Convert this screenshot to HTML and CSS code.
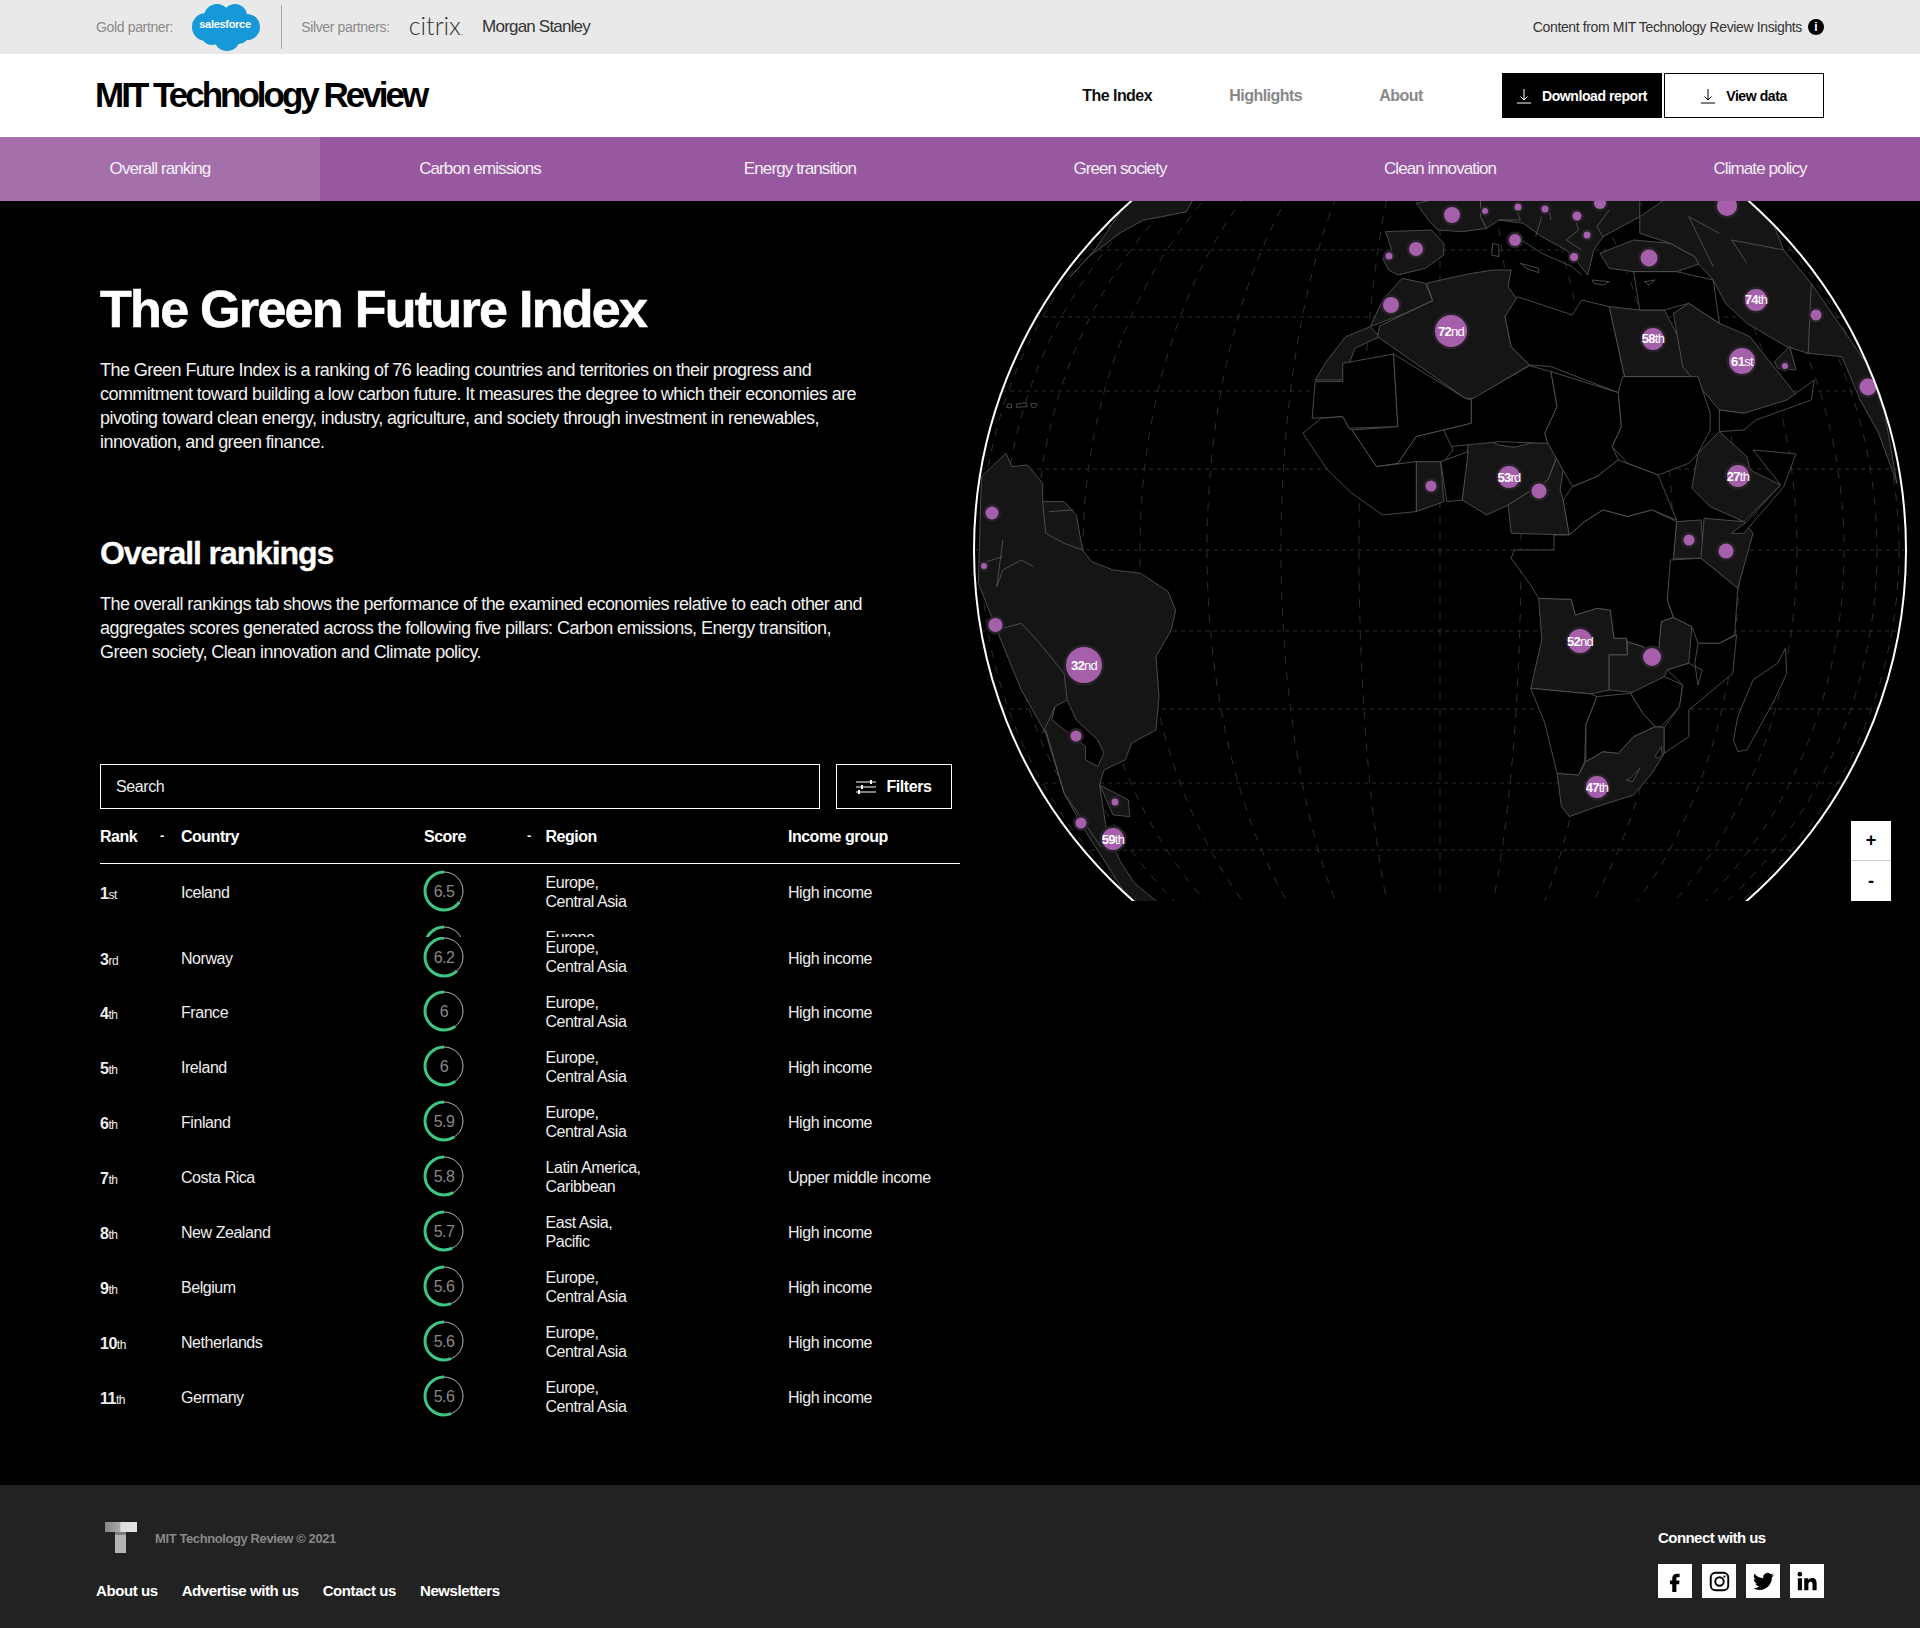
FILE: index.html
```html
<!DOCTYPE html>
<html lang="en">
<head>
<meta charset="utf-8">
<title>The Green Future Index</title>
<link rel="stylesheet" href="styles.css">
</head>
<body>

<div class="partners">
  <div class="partners-left">
    <span class="partner-label">Gold partner:</span>
    <svg class="salesforce" viewBox="0 0 70 48" width="70" height="48">
      <circle cx="16" cy="24" r="14"/><circle cx="27" cy="14" r="13"/><circle cx="45" cy="13" r="12"/><circle cx="57" cy="24" r="13"/><circle cx="37" cy="35" r="13"/><circle cx="22" cy="31" r="11"/><circle cx="49" cy="31" r="10"/>
      <text x="35" y="25" text-anchor="middle">salesforce</text>
    </svg>
    <span class="partner-rule"></span>
    <span class="partner-label">Silver partners:</span>
    <span class="citrix">citrix<small>.</small></span>
    <span class="morgan">Morgan Stanley</span>
  </div>
  <div class="partners-right">
    <span>Content from MIT Technology Review Insights</span>
    <span class="info">i</span>
  </div>
</div>

<header class="masthead">
  <div class="logo">MIT Technology Review</div>
  <nav class="mainnav">
    <a class="active">The Index</a>
    <a>Highlights</a>
    <a>About</a>
  </nav>
  <div class="actions">
    <a class="btn btn-dark"><svg viewBox="0 0 14 16" width="14" height="16"><path d="M7 1v11M3.500 8.500 7 12l3.500-3.500M0 15h14"/></svg>Download report</a>
    <a class="btn btn-light"><svg viewBox="0 0 14 16" width="14" height="16"><path d="M7 1v11M3.500 8.500 7 12l3.500-3.500M0 15h14"/></svg>View data</a>
  </div>
</header>

<div class="tabs">
  <a class="tab tab-on">Overall ranking</a>
  <a class="tab">Carbon emissions</a>
  <a class="tab">Energy transition</a>
  <a class="tab">Green society</a>
  <a class="tab">Clean innovation</a>
  <a class="tab">Climate policy</a>
</div>

<main class="main">
  <section class="left">
    <h1>The Green Future Index</h1>
    <p class="intro">The Green Future Index is a ranking of 76 leading countries and territories on their progress and<br>commitment toward building a low carbon future. It measures the degree to which their economies are<br>pivoting toward clean energy, industry, agriculture, and society through investment in renewables,<br>innovation, and green finance.</p>
    <h2>Overall rankings</h2>
    <p class="intro">The overall rankings tab shows the performance of the examined economies relative to each other and<br>aggregates scores generated across the following five pillars: Carbon emissions, Energy transition,<br>Green society, Clean innovation and Climate policy.</p>

    <div class="searchbar">
      <div class="search">Search</div>
      <button class="filters"><svg viewBox="0 0 20 16" width="20" height="16"><path d="M0 3h20M0 8h20M0 13h20"/><path class="knob" d="M15 1v4M6 6v4M3 11v4"/></svg>Filters</button>
    </div>

    <div class="table">
      <div class="row head">
        <div class="sortable">Rank<i>-</i></div><div>Country</div><div class="sortable">Score<i>-</i></div><div>Region</div><div>Income group</div>
      </div>

      <div class="row">
        <div class="rank"><b>1</b>st</div><div>Iceland</div>
        <div><div class="ring"><svg viewBox="0 0 40 40"><circle class="track" cx="20" cy="20" r="19"/><circle class="fill" cx="20" cy="20" r="19" pathLength="100" stroke-dasharray="65 100"/></svg><span>6.5</span></div></div>
        <div class="region">Europe,<br>Central Asia</div><div>High income</div>
      </div>
      <div class="row row-clipped">
        <div></div><div></div>
        <div><div class="ring"><svg viewBox="0 0 40 40"><circle class="track" cx="20" cy="20" r="19"/><circle class="fill" cx="20" cy="20" r="19" pathLength="100" stroke-dasharray="64 100"/></svg></div></div>
        <div class="region">Europe,<br>Central Asia</div><div></div>
      </div>
      <div class="row row-tucked">
        <div class="rank"><b>3</b>rd</div><div>Norway</div>
        <div><div class="ring"><svg viewBox="0 0 40 40"><circle class="track" cx="20" cy="20" r="19"/><circle class="fill" cx="20" cy="20" r="19" pathLength="100" stroke-dasharray="62 100"/></svg><span>6.2</span></div></div>
        <div class="region">Europe,<br>Central Asia</div><div>High income</div>
      </div>
      <div class="row">
        <div class="rank"><b>4</b>th</div><div>France</div>
        <div><div class="ring"><svg viewBox="0 0 40 40"><circle class="track" cx="20" cy="20" r="19"/><circle class="fill" cx="20" cy="20" r="19" pathLength="100" stroke-dasharray="60 100"/></svg><span>6</span></div></div>
        <div class="region">Europe,<br>Central Asia</div><div>High income</div>
      </div>
      <div class="row">
        <div class="rank"><b>5</b>th</div><div>Ireland</div>
        <div><div class="ring"><svg viewBox="0 0 40 40"><circle class="track" cx="20" cy="20" r="19"/><circle class="fill" cx="20" cy="20" r="19" pathLength="100" stroke-dasharray="60 100"/></svg><span>6</span></div></div>
        <div class="region">Europe,<br>Central Asia</div><div>High income</div>
      </div>
      <div class="row">
        <div class="rank"><b>6</b>th</div><div>Finland</div>
        <div><div class="ring"><svg viewBox="0 0 40 40"><circle class="track" cx="20" cy="20" r="19"/><circle class="fill" cx="20" cy="20" r="19" pathLength="100" stroke-dasharray="59 100"/></svg><span>5.9</span></div></div>
        <div class="region">Europe,<br>Central Asia</div><div>High income</div>
      </div>
      <div class="row">
        <div class="rank"><b>7</b>th</div><div>Costa Rica</div>
        <div><div class="ring"><svg viewBox="0 0 40 40"><circle class="track" cx="20" cy="20" r="19"/><circle class="fill" cx="20" cy="20" r="19" pathLength="100" stroke-dasharray="58 100"/></svg><span>5.8</span></div></div>
        <div class="region">Latin America,<br>Caribbean</div><div>Upper middle income</div>
      </div>
      <div class="row">
        <div class="rank"><b>8</b>th</div><div>New Zealand</div>
        <div><div class="ring"><svg viewBox="0 0 40 40"><circle class="track" cx="20" cy="20" r="19"/><circle class="fill" cx="20" cy="20" r="19" pathLength="100" stroke-dasharray="57 100"/></svg><span>5.7</span></div></div>
        <div class="region">East Asia,<br>Pacific</div><div>High income</div>
      </div>
      <div class="row">
        <div class="rank"><b>9</b>th</div><div>Belgium</div>
        <div><div class="ring"><svg viewBox="0 0 40 40"><circle class="track" cx="20" cy="20" r="19"/><circle class="fill" cx="20" cy="20" r="19" pathLength="100" stroke-dasharray="56 100"/></svg><span>5.6</span></div></div>
        <div class="region">Europe,<br>Central Asia</div><div>High income</div>
      </div>
      <div class="row">
        <div class="rank"><b>10</b>th</div><div>Netherlands</div>
        <div><div class="ring"><svg viewBox="0 0 40 40"><circle class="track" cx="20" cy="20" r="19"/><circle class="fill" cx="20" cy="20" r="19" pathLength="100" stroke-dasharray="56 100"/></svg><span>5.6</span></div></div>
        <div class="region">Europe,<br>Central Asia</div><div>High income</div>
      </div>
      <div class="row">
        <div class="rank"><b>11</b>th</div><div>Germany</div>
        <div><div class="ring"><svg viewBox="0 0 40 40"><circle class="track" cx="20" cy="20" r="19"/><circle class="fill" cx="20" cy="20" r="19" pathLength="100" stroke-dasharray="56 100"/></svg><span>5.6</span></div></div>
        <div class="region">Europe,<br>Central Asia</div><div>High income</div>
      </div>
    </div>
  </section>

  <section class="mapbox">
    <svg class="globe" viewBox="0 0 960 700" width="960" height="700">
      <defs><clipPath id="disc"><circle cx="480" cy="349" r="466"/></clipPath></defs>
      <g clip-path="url(#disc)">
        <!-- graticule, every 10 degrees -->
        <g class="grid">
          <ellipse cx="480" cy="349" rx="81" ry="466"/><ellipse cx="480" cy="349" rx="159" ry="466"/><ellipse cx="480" cy="349" rx="233" ry="466"/><ellipse cx="480" cy="349" rx="300" ry="466"/><ellipse cx="480" cy="349" rx="357" ry="466"/><ellipse cx="480" cy="349" rx="404" ry="466"/><ellipse cx="480" cy="349" rx="437" ry="466"/><ellipse cx="480" cy="349" rx="459" ry="466"/>
          <path d="M480-117V815"/>
          <path class="parallels" d="M14 349H946M21 268H939M42 190H918M76 116H884M123 49H837M21 430H939M42 508H918M76 582H884M123 649H837"/>
        </g>
        <!-- countries, traced in a 1568 wide space -->
        <g transform="translate(0,-1) scale(.6124 .3333)">
          <g class="land">
            <path d="M75,760 85,800 110,795 135,850 135,905 170,905 190,945 200,1050 215,1085 250,1110 295,1120 340,1175 352,1230 345,1290 320,1370 325,1490 320,1590 280,1630 270,1680 235,1710 228,1755 275,1800 277,1850 250,1845 228,1755 240,1900 262,1985 285,2050 325,2110 280,2110 200,1880 170,1780 140,1600 100,1470 60,1290 30,1150 35,830Z"/>
            <path d="M275,0 380,0 370,35 330,50 300,60 260,100 240,130 210,170 190,210 180,230 220,150Z"/>
            <path d="M695,95 770,90 790,130 790,165 760,205 715,225 700,210 690,175 705,150Z"/>
            <path d="M745,10 770,0 850,0 850,50 860,85 820,95 780,90 765,60Z"/>
            <path d="M850,0 1110,0 1110,50 1070,90 1050,110 1035,150 1025,225 1010,190 990,150 950,110 920,70 880,60 860,85 850,50Z"/>
            <path d="M1045,160 1100,120 1160,130 1200,170 1210,190 1170,215 1100,215 1060,205Z"/>
            <path d="M1150,0 1285,0 1330,80 1345,150 1390,250 1420,330 1480,490 1510,640 1530,850 1500,700 1470,600 1440,470 1385,460 1350,440 1285,370 1250,310 1230,240 1205,190 1200,170 1160,130 1110,100 1110,50Z"/>
            <path d="M722,235 760,250 772,302 720,345 670,380 690,300Z"/>
            <path d="M670,380 685,410 645,445 625,540 580,540 600,480 630,410Z"/>
            <path d="M762,250 790,238 830,222 870,210 900,210 895,260 910,300 890,350 900,440 930,495 840,595 825,595 682,410 685,378 772,302Z"/>
            <path d="M1060,320 1110,330 1150,330 1170,400 1205,530 1085,530Z"/>
            <path d="M1165,340 1190,310 1240,370 1290,410 1320,480 1370,595 1280,640 1240,630 1180,500Z"/>
            <path d="M1330,485 1355,440 1365,510 1335,505Z"/>
            <path d="M820,900 830,730 860,718 880,735 905,742 935,728 960,725 975,770 960,840 895,915 860,945Z"/>
            <path d="M975,770 985,810 980,870 985,900 995,1005 900,1000 895,915 960,840Z"/>
            <path d="M745,785 785,785 790,905 745,935Z"/>
            <path d="M1240,695 1285,770 1290,810 1340,855 1280,965 1225,920 1195,865 1205,760Z"/>
            <path d="M1170,965 1210,960 1215,1075 1165,1075Z"/>
            <path d="M1215,955 1280,965 1295,1000 1270,1165 1210,1075Z"/>
            <path d="M945,1195 998,1198 1005,1245 1040,1225 1062,1230 1068,1315 1088,1315 1090,1365 1060,1365 1060,1470 1030,1482 960,1470 932,1465 950,1320Z"/>
            <path d="M1090,1325 1115,1340 1140,1370 1145,1265 1165,1252 1195,1280 1190,1390 1155,1410 1150,1430 1115,1480 1060,1470 1060,1365 1090,1365Z"/>
            <path d="M975,1720 1010,1725 1022,1685 1050,1655 1075,1660 1100,1610 1135,1580 1150,1582 1150,1660 1130,1720 1100,1785 1040,1820 995,1850 982,1820Z"/>
          </g>
          <g class="plain">
            <path d="M1100,215 1170,215 1230,240 1240,370 1190,310 1150,330 1110,330Z"/>
            <path d="M580,545 625,545 625,490 708,462 715,680 635,685 625,650 575,655Z"/>
            <path d="M708,462 825,595 835,600 835,670 790,690 745,710 715,790 680,800 640,690 715,680Z"/>
            <path d="M835,598 930,497 965,515 975,620 955,700 960,730 880,725 800,740 790,690 835,670Z"/>
            <path d="M910,290 1000,345 1015,300 1060,320 1085,530 1075,578 965,500 930,495 900,440 890,350Z"/>
            <path d="M965,515 1075,578 1080,680 1065,740 1075,780 1040,830 1000,860 960,730 955,700 975,620Z"/>
            <path d="M1082,530 1205,530 1225,640 1225,690 1205,760 1190,790 1140,825 1090,790 1065,740 1080,680 1075,578Z"/>
            <path d="M715,790 745,710 790,690 805,750 790,785 745,785 715,800Z"/>
            <path d="M560,700 590,655 625,650 635,685 640,690 680,800 745,785 745,935 690,945 640,880 600,810Z"/>
            <path d="M785,785 830,755 820,900 795,905Z"/>
            <path d="M1295,750 1365,762 1345,860 1280,1000 1260,1000 1285,965 1340,855Z"/>
            <path d="M1240,630 1280,640 1350,600 1395,540 1390,600 1300,660 1280,690 1240,695Z"/>
            <path d="M1000,860 1040,830 1075,780 1140,825 1170,960 1130,930 1090,950 1050,930 1020,965 995,1005 985,900Z"/>
            <path d="M970,1005 995,1005 1020,965 1050,930 1090,950 1130,930 1170,965 1165,1075 1160,1120 1155,1200 1165,1252 1145,1265 1140,1370 1115,1340 1090,1325 1088,1315 1068,1315 1062,1230 1040,1225 1005,1245 998,1198 945,1195 930,1150 900,1075 905,1050 970,1050Z"/>
            <path d="M1160,1080 1210,1075 1270,1165 1265,1305 1240,1330 1205,1330 1195,1280 1165,1252 1155,1200Z"/>
            <path d="M932,1465 960,1470 1030,1482 1040,1490 1022,1575 1020,1685 1010,1725 975,1720 955,1570Z"/>
            <path d="M1040,1490 1095,1480 1115,1540 1135,1580 1100,1610 1075,1660 1050,1655 1022,1685 1022,1575Z"/>
            <path d="M1095,1480 1150,1430 1180,1455 1175,1520 1145,1580 1135,1580 1115,1540Z"/>
            <path d="M1205,1330 1240,1330 1268,1305 1262,1420 1190,1530 1190,1610 1150,1660 1150,1582 1175,1520 1180,1455 1155,1410 1190,1390 1212,1410 1205,1455 1200,1390Z"/>
            <path d="M1348,1345 1350,1420 1330,1500 1285,1650 1270,1655 1263,1620 1270,1550 1295,1440 1335,1390Z"/>
            <path d="M1095,1735 1110,1705 1098,1745 1088,1740Z"/>
            <path d="M1135,1670 1145,1640 1147,1665 1140,1675Z"/>
            <path d="M155,1520 175,1500 190,1560 225,1620 235,1660 225,1700 205,1680 205,1640 150,1560Z"/>
            <path d="M915,190 945,205 945,218 925,205Z"/>
            <path d="M870,130 880,135 880,170 868,165Z"/>
            <path d="M1032,240 1060,245 1050,255 1035,250Z"/>
            <path d="M1118,245 1135,240 1125,255Z"/>
            <path d="M78,612 84,612 84,624 76,622ZM92,612 108,608 110,620 92,622ZM116,610 126,612 122,624 116,620Z"/>
          </g>
          <g class="lines">
            <path d="M60,1290 100,1270 130,1330 170,1420 175,1500M135,1600 155,1520M140,1590 170,1780 230,1940M70,1020 60,1160 70,1110 100,1080 120,1100M135,905 140,1000 170,1030 200,1050M145,935 185,930M35,1090 70,1070"/>
            <path d="M900,100 950,160 1000,200 1015,225M950,50 940,110M1000,30 1010,90 990,120 1015,150M1060,30 1040,80 1050,110M905,10 915,60 880,60M960,10 965,60M1240,100 1190,50 1230,200M1285,190 1260,120 1345,150M1390,250 1385,460"/>
          </g>
        </g>
        <!-- rated countries -->
        <g class="pins">
          <circle cx="492" cy="14" r="8"/><circle cx="525" cy="10" r="3"/><circle cx="558" cy="6" r="3.500"/><circle cx="585" cy="8" r="3.500"/><circle cx="617" cy="15" r="4.500"/><circle cx="640" cy="2" r="6"/><circle cx="767" cy="5" r="10"/><circle cx="627" cy="34" r="3.500"/><circle cx="555" cy="39" r="6"/><circle cx="456" cy="48" r="7"/><circle cx="429" cy="55" r="3.500"/><circle cx="614" cy="56" r="4"/><circle cx="689" cy="57" r="8.500"/><circle cx="431" cy="104" r="8"/><circle cx="796" cy="99" r="11"/><circle cx="856" cy="114" r="5.500"/><circle cx="491" cy="130" r="16"/><circle cx="693" cy="138" r="11"/><circle cx="782" cy="160" r="13"/><circle cx="825" cy="165" r="3"/><circle cx="908" cy="186" r="8.500"/><circle cx="549" cy="276" r="11"/><circle cx="778" cy="275" r="11"/><circle cx="579" cy="290" r="7.500"/><circle cx="471" cy="285" r="5.500"/><circle cx="32" cy="312" r="6.500"/><circle cx="729" cy="339" r="5.500"/><circle cx="766" cy="350" r="7.500"/><circle cx="24" cy="365" r="3"/><circle cx="35.500" cy="424" r="7"/><circle cx="124" cy="464" r="18"/><circle cx="620" cy="440" r="12"/><circle cx="692" cy="456" r="9"/><circle cx="637" cy="586" r="11"/><circle cx="116" cy="535" r="5.500"/><circle cx="155" cy="601" r="3.500"/><circle cx="121" cy="622" r="5.500"/><circle cx="153" cy="638" r="11"/>
        </g>
        <g class="pin-labels">
          <text x="796" y="103">74<tspan>th</tspan></text>
          <text x="491" y="135">72<tspan>nd</tspan></text>
          <text x="693" y="142">58<tspan>th</tspan></text>
          <text x="782" y="165">61<tspan>st</tspan></text>
          <text x="549" y="281">53<tspan>rd</tspan></text>
          <text x="778" y="280">27<tspan>th</tspan></text>
          <text x="124" y="469">32<tspan>nd</tspan></text>
          <text x="620" y="445">52<tspan>nd</tspan></text>
          <text x="637" y="591">47<tspan>th</tspan></text>
          <text x="153" y="643">59<tspan>th</tspan></text>
        </g>
      </g>
      <circle class="rim" cx="480" cy="349" r="466"/>
    </svg>
    <div class="zoomctl">
      <button>+</button>
      <button>-</button>
    </div>
  </section>
</main>

<footer class="footer">
  <div class="foot-left">
    <div class="foot-brand">
      <svg viewBox="0 0 32 32" width="32" height="32">
        <defs><linearGradient id="tbar"><stop offset="0" stop-color="#858587"/><stop offset=".45" stop-color="#a8a8aa"/><stop offset=".5" stop-color="#dcdcde"/><stop offset="1" stop-color="#e4e4e6"/></linearGradient></defs>
        <path fill="url(#tbar)" d="M0 0h32v10H0z"/><path fill="#b4b4b6" d="M10 10h11v21H10z"/><path fill="#7c7c7e" d="M10 10h11l0 3H10z"/>
      </svg>
      <span>MIT Technology Review © 2021</span>
    </div>
    <div class="foot-links">
      <a>About us</a><a>Advertise with us</a><a>Contact us</a><a>Newsletters</a>
    </div>
  </div>
  <div class="foot-right">
    <div class="connect">Connect with us</div>
    <div class="socials">
      <a><svg viewBox="0 0 24 24" width="22" height="22"><path d="M14.500 8H17V4h-3c-3 0-5 2-5 5v2.500H6.500v4H9V24h4.500v-8.500h3l.5-4h-3.500V9c0-.6.4-1 1-1z"/></svg></a>
      <a><svg viewBox="0 0 24 24" width="21" height="21"><rect class="ig" x="2" y="2" width="20" height="20" rx="5.500"/><circle class="ig" cx="12" cy="12" r="4.800"/><circle cx="17.700" cy="6.300" r="1.300"/></svg></a>
      <a><svg viewBox="0 0 24 24" width="21" height="21"><path d="M23.953 4.570a10 10 0 01-2.825.775 4.958 4.958 0 002.163-2.723c-.951.555-2.005.959-3.127 1.184a4.920 4.920 0 00-8.384 4.482C7.690 8.095 4.067 6.130 1.640 3.162a4.822 4.822 0 00-.666 2.475c0 1.710.870 3.213 2.188 4.096a4.904 4.904 0 01-2.228-.616v.060a4.923 4.923 0 003.946 4.827 4.996 4.996 0 01-2.212.085 4.936 4.936 0 004.604 3.417 9.867 9.867 0 01-6.102 2.105c-.390 0-.779-.023-1.170-.067a13.995 13.995 0 007.557 2.209c9.053 0 13.998-7.496 13.998-13.985 0-.210 0-.420-.015-.630A9.935 9.935 0 0024 4.590z"/></svg></a>
      <a><svg viewBox="0 0 24 24" width="22" height="22"><path d="M2 9h4.500v13H2zM9 9h4.300v1.900c.7-1.200 2.200-2.200 4.300-2.200 4.200 0 4.900 2.800 4.900 6.300V22H18v-6c0-1.500-.1-3.300-2.100-3.300s-2.400 1.600-2.400 3.200V22H9z"/><circle cx="4.200" cy="4.500" r="2.500"/></svg></a>
    </div>
  </div>
</footer>

</body>
</html>
```

FILE: styles.css
```css
* { box-sizing: border-box; }
html, body { margin: 0; padding: 0; }
body { background: #000; color: #fff; font-family: "Liberation Sans", Arial, sans-serif; width: 1920px; }
a { display: block; }
button { font-family: inherit; }

/* partner strip */
.partners { height: 54px; background: #e9e9e9; padding: 0 96px; display: flex; justify-content: space-between; align-items: center; color: #8a8a8a; font-size: 14px; letter-spacing: -.35px; }
.partners-left { display: flex; align-items: center; }
.partner-label { display: block; }
.salesforce { margin-left: 17px; display: block; }
.salesforce circle { fill: #1798d8; }
.salesforce text { fill: #fff; font-size: 11px; font-weight: bold; letter-spacing: -.3px; }
.partner-rule { width: 1px; height: 44px; background: #aaa; margin: 0 19px 0 21px; }
.citrix { margin-left: 19px; padding-bottom: 4px; font-family: Lato, sans-serif; font-weight: 300; font-size: 25px; letter-spacing: 0; color: #333; line-height: 1; }
.citrix small { font-size: 10px; }
.morgan { margin-left: 19px; font-size: 17px; letter-spacing: -.8px; color: #333; }
.partners-right { display: flex; align-items: center; gap: 6px; color: #333; letter-spacing: -.37px; }
.info { width: 16px; height: 16px; border-radius: 50%; background: #000; color: #fff; font-size: 12px; font-weight: bold; text-align: center; line-height: 16px; letter-spacing: 0; }

/* masthead */
.masthead { height: 83px; background: #fff; padding: 0 96px; display: flex; align-items: center; color: #000; }
.logo { font-size: 35px; font-weight: bold; letter-spacing: -3px; width: 988px; margin-left: -1px; padding-bottom: 2px; }
.mainnav { display: flex; width: 420px; font-size: 16px; font-weight: bold; letter-spacing: -.55px; color: #888; }
.mainnav a:nth-child(1) { width: 147px; }
.mainnav a:nth-child(2) { width: 150px; }
.mainnav .active { color: #111; }
.actions { display: flex; gap: 2px; }
.btn { width: 160px; height: 45px; display: flex; align-items: center; justify-content: center; gap: 11px; font-size: 14px; font-weight: bold; letter-spacing: -.42px; }
.btn svg { fill: none; stroke: currentColor; stroke-width: 1; }
.btn-dark { background: #000; color: #fff; }
.btn-light { background: #fff; color: #000; border: 1px solid #000; }

/* pillar tabs */
.tabs { height: 64px; background: #97589f; display: grid; grid-template-columns: repeat(6, 320px); }
.tab { display: flex; align-items: center; justify-content: center; font-size: 17px; letter-spacing: -.9px; color: #f4eef5; }
.tab-on { background: #a56fac; }

/* main */
.main { display: grid; grid-template-columns: 960px 960px; height: 1284px; background: #000; }
.left { padding: 78px 0 0 100px; }
h1 { margin: 0 0 19px; font-size: 52px; line-height: 60px; letter-spacing: -1.700px; font-weight: bold; -webkit-text-stroke: .6px #fff; }
h2 { margin: 79px 0 19px; font-size: 32px; line-height: 40px; letter-spacing: -1.100px; font-weight: bold; -webkit-text-stroke: .3px #fff; }
.intro { margin: 0; font-size: 18px; line-height: 24px; letter-spacing: -.56px; color: #f1f1f1; }

.searchbar { display: flex; gap: 16px; margin-top: 100px; width: 852px; }
.search { width: 720px; height: 45px; border: 1px solid #fff; padding: 0 15px; line-height: 43px; font-size: 16px; letter-spacing: -.4px; color: #eee; }
.filters { width: 116px; height: 45px; border: 1px solid #fff; background: #000; color: #fff; font-size: 16px; font-weight: bold; letter-spacing: -.4px; display: flex; align-items: center; justify-content: center; gap: 10px; padding: 0; }
.filters svg { fill: none; stroke: #fff; stroke-width: 1.2; }
.filters .knob { stroke-width: 2; }

.table { width: 860px; font-size: 16px; letter-spacing: -.45px; color: #eee; }
.row { display: grid; grid-template-columns: 81px 243px 121.500px 242.500px 172px; align-items: center; padding: 7px 0 8px; height: 55px; overflow: hidden; background: #000; }
.row > div:nth-child(2), .row > div:nth-child(5) { padding-top: 4px; }
.row .rank { padding-top: 5px; }
.row.head { height: 55px; padding: 2px 0 0; border-bottom: 1px solid #fff; font-weight: bold; color: #fff; letter-spacing: -.5px; }
.row.head > div { padding-top: 0; }
.row-clipped { height: 18px; grid-template-rows: 40px; padding: 7px 0 0; }
.row-tucked { height: 47px; padding: 0 0 7px; }
.row-tucked .region { padding-top: 0; }
.sortable { position: relative; }
.sortable i { position: absolute; font-style: normal; font-size: 13px; top: 0; }
.sortable:nth-child(1) i { left: 60px; }
.sortable:nth-child(3) i { left: 103px; }
.rank { font-size: 12px; letter-spacing: -.4px; }
.rank b { font-size: 16px; letter-spacing: -.5px; }
.region { line-height: 19px; padding-top: 2px; }
.ring { position: relative; width: 40px; height: 40px; }
.ring svg { display: block; width: 40px; height: 40px; overflow: visible; transform: scaleX(-1) rotate(-90deg); }
.ring circle { fill: none; }
.ring .track { stroke: #bbb; stroke-width: 1; }
.ring .fill { stroke: #3ec483; stroke-width: 3; }
.ring span { position: absolute; left: 0; top: 0; width: 40px; line-height: 42px; text-align: center; color: #888; font-size: 16px; letter-spacing: -.5px; }

/* map */
.mapbox { position: relative; height: 700px; }
.globe { display: block; }
.grid { fill: none; stroke: #3a3a3a; stroke-width: .8; stroke-dasharray: 8 8; }
.grid .parallels { stroke-dasharray: 4 4; }
.land path { fill: #151515; stroke: #5a5a5a; stroke-width: .8; vector-effect: non-scaling-stroke; stroke-linejoin: round; }
.plain path { fill: #000; stroke: #5a5a5a; stroke-width: .8; vector-effect: non-scaling-stroke; stroke-linejoin: round; }
.lines path { fill: none; stroke: #5a5a5a; stroke-width: .8; vector-effect: non-scaling-stroke; }
.pins circle { fill: #a660ab; stroke: #262027; stroke-width: 5; paint-order: stroke; }
.pin-labels text { fill: #fff; font-size: 13px; font-weight: bold; letter-spacing: -.7px; text-anchor: middle; }
.pin-labels tspan { font-weight: normal; }
.rim { fill: none; stroke: #fff; stroke-width: 2; }
.zoomctl { position: absolute; right: 29px; bottom: 0; width: 40px; height: 80px; background: #fff; display: flex; flex-direction: column; }
.zoomctl button { height: 40px; border: 0; background: none; font-size: 18px; font-weight: bold; color: #000; padding: 0; }
.zoomctl button:first-child { border-bottom: 1px solid #ccc; }

/* footer */
.footer { height: 143px; background: #222; padding: 37px 96px 0; display: flex; justify-content: space-between; }
.foot-brand { display: flex; align-items: center; gap: 18px; padding-left: 9px; color: #888; font-size: 13px; font-weight: bold; letter-spacing: -.4px; }
.foot-links { display: flex; gap: 24px; margin-top: 28px; font-size: 15px; font-weight: bold; letter-spacing: -.42px; color: #fff; }
.foot-right { padding-top: 7px; }
.connect { font-size: 15px; font-weight: bold; letter-spacing: -.55px; }
.socials { display: flex; gap: 10px; margin-top: 18px; }
.socials a { width: 34px; height: 34px; background: #fff; display: flex; align-items: center; justify-content: center; }
.socials svg { fill: #000; }
.socials .ig { fill: none; stroke: #000; stroke-width: 2.200; }
```
